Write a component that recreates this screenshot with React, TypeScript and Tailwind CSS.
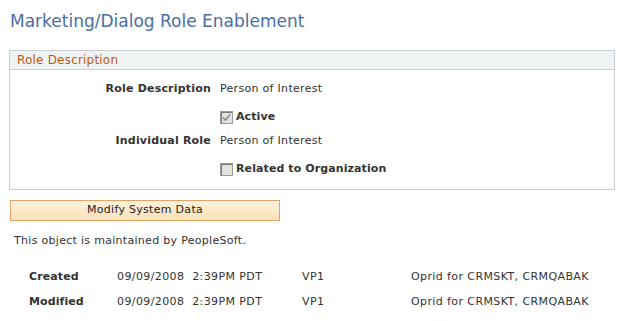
import React from 'react';

const font = { fontFamily: '"DejaVu Sans", Verdana, sans-serif' };

const Check: React.FC<{ checked?: boolean }> = ({ checked }) => (
  <span className="inline-flex h-[13px] w-[13px] items-center justify-center border border-[#9a9a9a] bg-[#e4e2dc] shadow-[inset_1px_1px_0_#7a7a7a]">
    {checked && (
      <svg width="9" height="9" viewBox="0 0 9 9">
        <path d="M1 4.5 L3.5 7 L8 1.5" fill="none" stroke="#8a8a8a" strokeWidth="1.6" />
      </svg>
    )}
  </span>
);

const App: React.FC = () => {
  const audit = [
    { label: 'Created', when: '09/09/2008  2:39PM PDT', by: 'VP1', desc: 'Oprid for CRMSKT, CRMQABAK' },
    { label: 'Modified', when: '09/09/2008  2:39PM PDT', by: 'VP1', desc: 'Oprid for CRMSKT, CRMQABAK' },
  ];

  return (
    <div className="h-[321px] w-[627px] bg-white text-[11px] text-[#333]" style={font}>
      {/* Page title */}
      <h1 className="pl-[10px] pt-[10px] text-[17px] leading-[22px] text-[#4a6ea3]">
        Marketing/Dialog Role Enablement
      </h1>

      {/* Role Description group box */}
      <div className="ml-[9px] mt-[18px] w-[606px] border border-[#c9cdd2]">
        <div className="h-[19px] border-b border-[#c9cdd2] bg-[#eff3f4] pl-[7px] text-[12px] leading-[18px] tracking-[0.2px] text-[#c0580c]">
          Role Description
        </div>
        <div className="grid grid-cols-[201px_1fr] gap-x-[9px] pb-[12px] pt-[11px]">
          <div className="h-[16px] text-right font-bold leading-[16px] tracking-[0.2px]">Role Description</div>
          <div className="leading-[16px] tracking-[0.3px]">Person of Interest</div>
          <div />
          <div className="mt-[12px] flex h-[16px] items-center gap-[3px] font-bold tracking-[0.1px]">
            <Check checked />
            Active
          </div>
          <div className="mt-[8px] text-right font-bold leading-[16px] tracking-[0.2px]">Individual Role</div>
          <div className="mt-[8px] leading-[16px] tracking-[0.3px]">Person of Interest</div>
          <div />
          <div className="mt-[12px] flex h-[16px] items-center gap-[3px] font-bold tracking-[0.1px]">
            <Check />
            Related to Organization
          </div>
        </div>
      </div>

      {/* Modify button */}
      <div className="ml-[10px] mt-[10px] flex h-[21px] w-[270px] items-center justify-center border border-[#dfa46a] bg-gradient-to-b from-[#fdf1dc] to-[#fbe2b6] text-[11px] tracking-[0.3px] text-[#222]">
        Modify System Data
      </div>

      <p className="ml-[14px] mt-[12px] leading-[16px] tracking-[0.3px]">This object is maintained by PeopleSoft.</p>

      {/* Audit rows */}
      <div className="mt-[20px] flex flex-col gap-[9px] tracking-[0.4px]">
        {audit.map((r) => (
          <div key={r.label} className="flex leading-[16px]">
            <div className="w-[117px] pl-[29px] font-bold tracking-[0.1px]">{r.label}</div>
            <div className="w-[185px] whitespace-pre">{r.when}</div>
            <div className="w-[109px]">{r.by}</div>
            <div>{r.desc}</div>
          </div>
        ))}
      </div>
    </div>
  );
};

export default App;
